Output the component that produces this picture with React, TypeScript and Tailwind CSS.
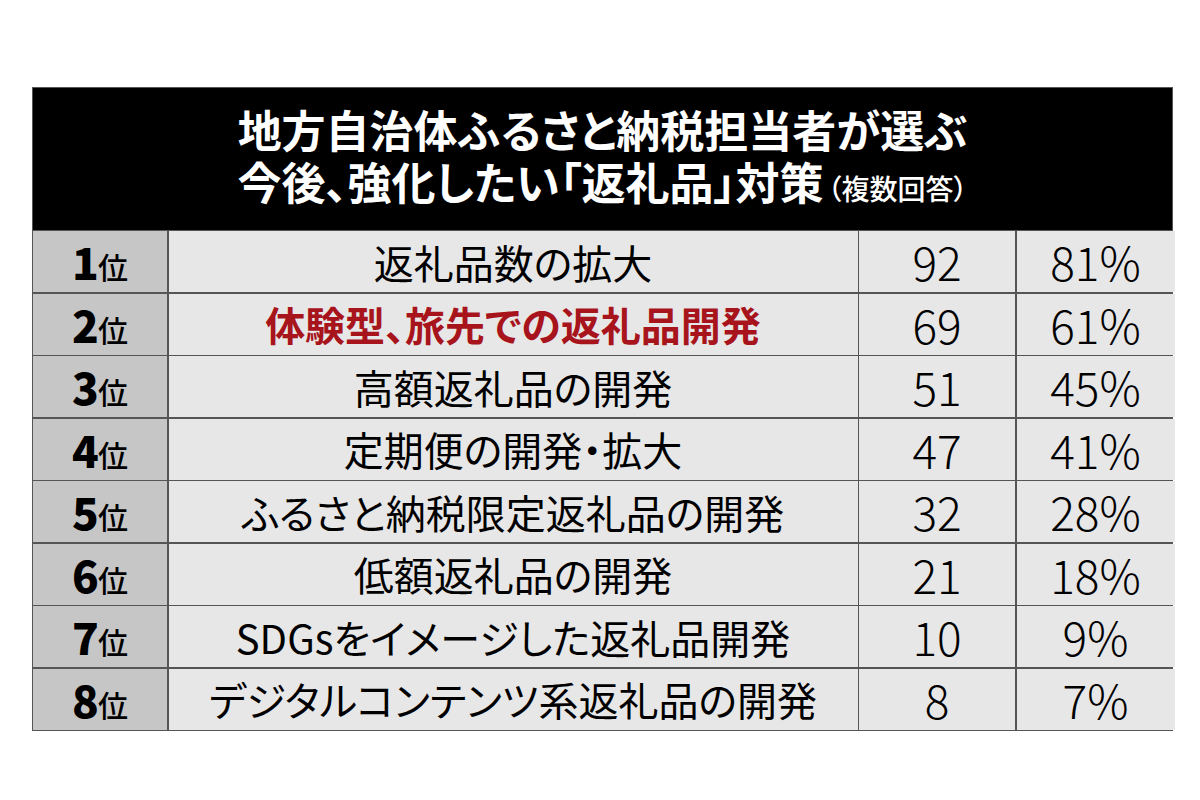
const rows = [
  { rank: '1', item: '返礼品数の拡大', count: '92', pct: '81%' },
  { rank: '2', item: '体験型、旅先での返礼品開発', count: '69', pct: '61%', hot: true },
  { rank: '3', item: '高額返礼品の開発', count: '51', pct: '45%' },
  { rank: '4', item: '定期便の開発・拡大', count: '47', pct: '41%' },
  { rank: '5', item: 'ふるさと納税限定返礼品の開発', count: '32', pct: '28%' },
  { rank: '6', item: '低額返礼品の開発', count: '21', pct: '18%' },
  { rank: '7', item: 'SDGsをイメージした返礼品開発', count: '10', pct: '9%' },
  { rank: '8', item: 'デジタルコンテンツ系返礼品の開発', count: '8', pct: '7%' },
];

export default function App() {
  return (
    <div
      className="w-[1200px] h-[800px] bg-white pt-[87px] pl-[32px] [font-feature-settings:'palt'] text-black"
      style={{ fontFamily: '"Noto Sans CJK JP", "Noto Sans", sans-serif' }}
    >
      <div className="w-[1141px] border border-[#555] bg-[#555]">
        {/* Title */}
        <div className="h-[142px] bg-black flex flex-col items-center justify-center text-white font-bold pb-[2px]">
          <div className="text-[44px] leading-[52px]">地方自治体ふるさと納税担当者が選ぶ</div>
          <div className="flex items-baseline leading-[52px]">
            <span className="text-[44px]">今後、強化したい「返礼品」対策</span>
            <span className="text-[28px] font-medium ml-[4px]">（複数回答）</span>
          </div>
        </div>

        {/* Rows */}
        <div className="grid grid-cols-[134px_689px_156px_158px] gap-[1.5px] pt-[1px]">
          {rows.map((r) => (
            <div key={r.rank} className="contents">
              <div className="h-[61px] bg-[#c6c6c6] flex items-end justify-center pb-[9px]">
                <span className="text-[44px] font-black leading-none tracking-[-1px]">{r.rank}</span>
                <span className="text-[30px] font-medium leading-none mb-[2px]">位</span>
              </div>
              <div
                className={
                  r.hot
                    ? 'h-[61px] bg-[#e7e7e7] flex items-center justify-center text-[40px] font-bold text-[#a8141c]'
                    : 'h-[61px] bg-[#e7e7e7] flex items-center justify-center text-[40px] font-normal'
                }
              >
                {r.item}
              </div>
              <div className="h-[61px] bg-[#e7e7e7] flex items-center justify-center text-[46px] font-light">
                {r.count}
              </div>
              <div className="h-[61px] bg-[#e7e7e7] flex items-center justify-center text-[46px] font-light">
                {r.pct}
              </div>
            </div>
          ))}
        </div>
      </div>
    </div>
  );
}
